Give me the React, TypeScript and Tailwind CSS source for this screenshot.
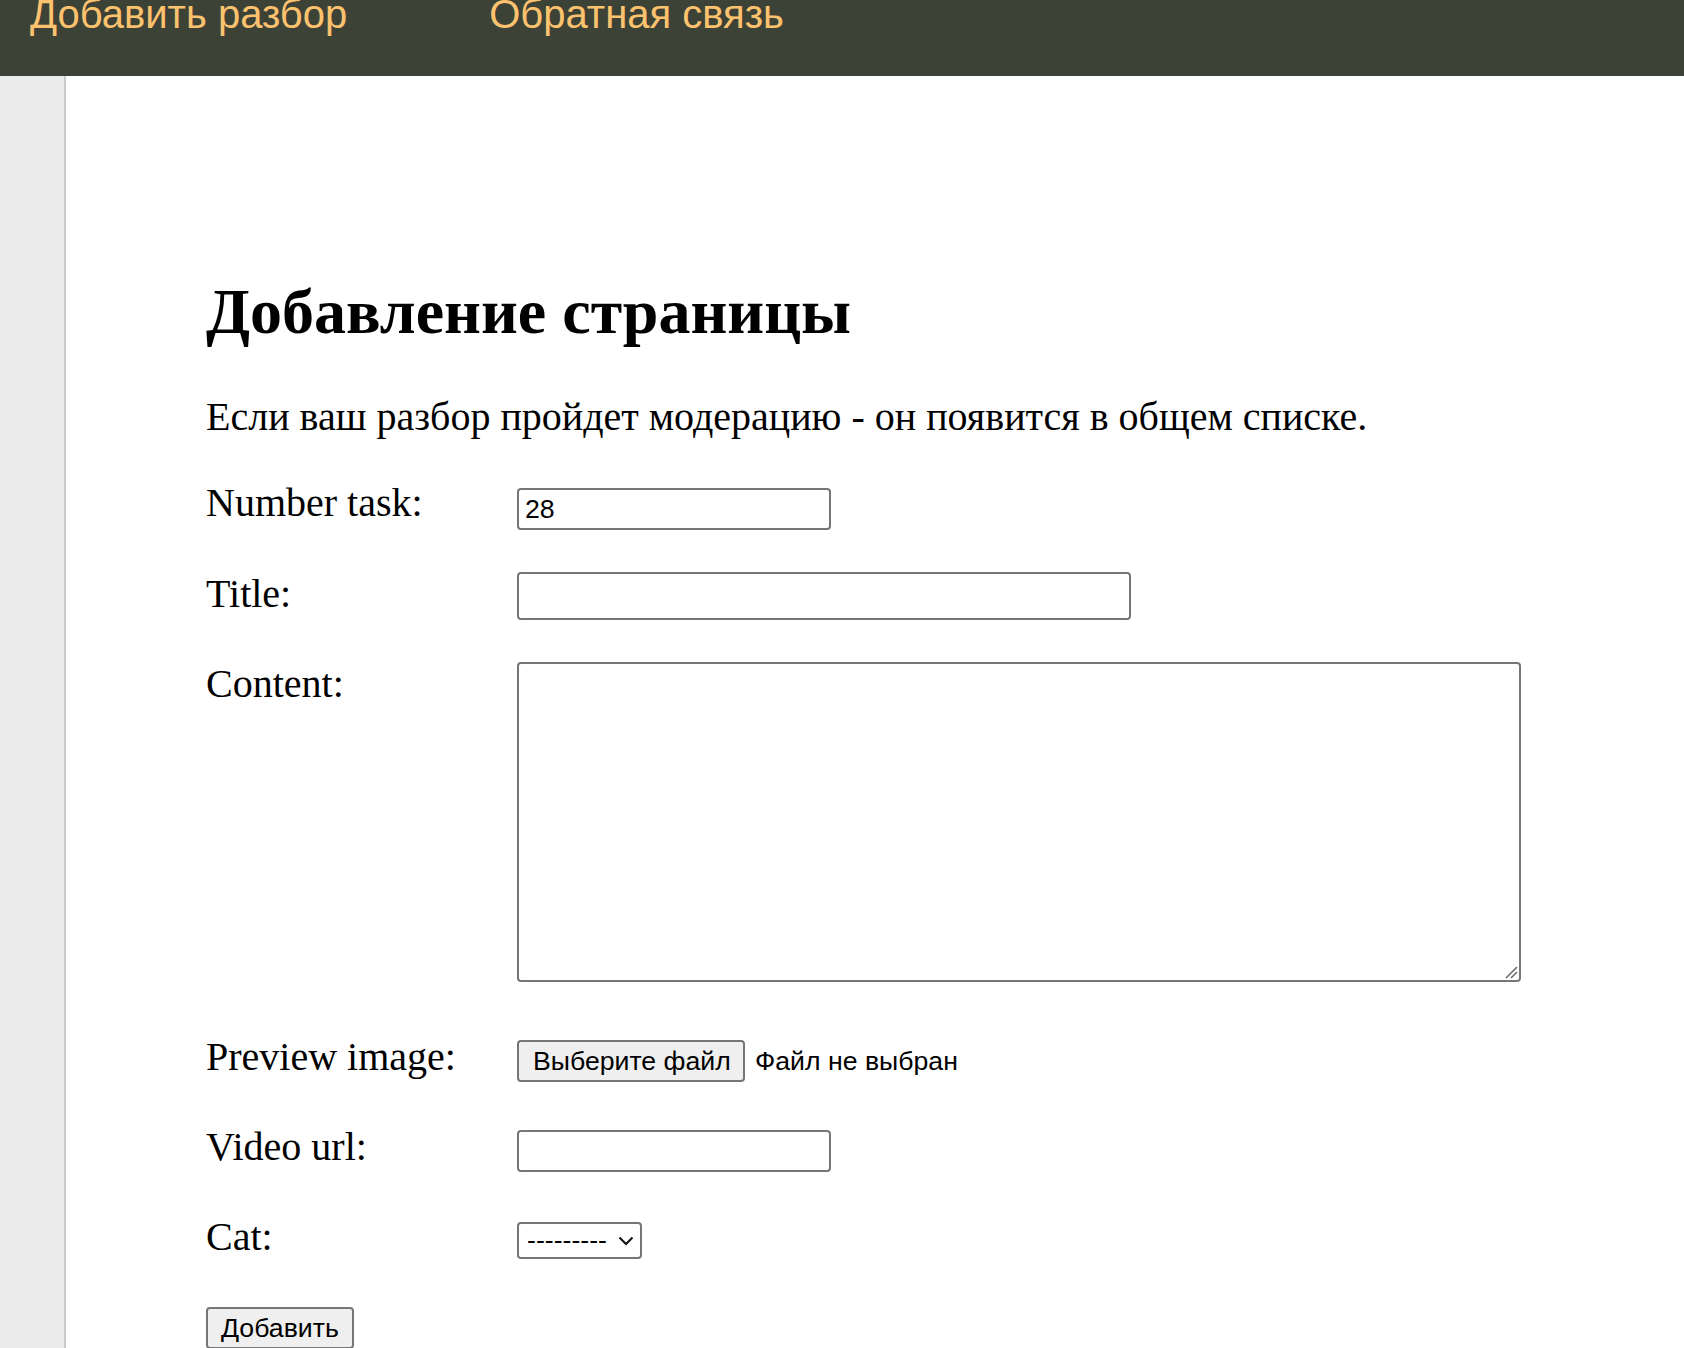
import React from 'react';

const serif = { fontFamily: '"Liberation Serif", "Times New Roman", serif' };

const navItems = ['Добавить разбор', 'Обратная связь'];

const FormRow = ({ label, className = '', children }) => (
  <div className={`flex items-start ${className}`}>
    <label className="w-[311px] shrink-0 text-[40px] leading-[46px] text-black">{label}</label>
    {children}
  </div>
);

export default function App() {
  return (
    <div className="flex h-[1348px] flex-col overflow-hidden bg-white" style={serif}>
      {/* верхнее меню (страница прокручена, верх текста обрезан) */}
      <header className="h-[76px] shrink-0 overflow-hidden bg-[#3d4237]">
        <nav className="-mt-[6px] flex gap-[142px] pl-[30px] font-['Liberation_Sans',Arial,sans-serif] text-[40px] leading-[40px] text-[#fdc26e]">
          {navItems.map((item) => (
            <a key={item} href="#" className="whitespace-nowrap">
              {item}
            </a>
          ))}
        </nav>
      </header>

      <div className="flex flex-1">
        <aside className="w-[66px] shrink-0 border-r-2 border-[#cccccc] bg-[#ececec]" />

        <main className="flex-1 pl-[140px] pt-[204px]">
          <h1 className="text-[64px] font-bold leading-[64px] text-black">Добавление страницы</h1>
          <p className="mt-[50px] text-[40px] leading-[46px] text-black">
            Если ваш разбор пройдет модерацию - он появится в общем списке.
          </p>

          <form className="font-['Liberation_Sans',Arial,sans-serif]" onSubmit={(e) => e.preventDefault()}>
            <div style={serif}>
              <FormRow label="Number task:" className="mt-[40px]">
                <input
                  type="text"
                  defaultValue="28"
                  className="mt-[8px] h-[42px] w-[314px] rounded-[4px] border-2 border-[#767676] px-[6px] font-['Liberation_Sans',Arial,sans-serif] text-[26.67px] text-black"
                />
              </FormRow>

              <FormRow label="Title:" className="mt-[41px]">
                <input
                  type="text"
                  className="mt-[1px] h-[48px] w-[614px] rounded-[4px] border-2 border-[#767676] px-[6px] font-['Liberation_Sans',Arial,sans-serif] text-[26.67px]"
                />
              </FormRow>

              <FormRow label="Content:" className="mt-[41px]">
                <div className="relative mt-[1px]">
                  <textarea className="block h-[320px] w-[1004px] resize-none rounded-[4px] border-2 border-[#767676] p-[4px] font-['Liberation_Sans',Arial,sans-serif] text-[26.67px]" />
                  {/* ручка изменения размера */}
                  <svg
                    className="pointer-events-none absolute bottom-[3px] right-[3px]"
                    width="14"
                    height="14"
                    viewBox="0 0 14 14"
                    fill="none"
                  >
                    <path d="M2 13 L13 2" stroke="#6b6b6b" strokeWidth="1.6" />
                    <path d="M7 13 L13 7" stroke="#6b6b6b" strokeWidth="1.6" />
                  </svg>
                </div>
              </FormRow>

              <FormRow label="Preview image:" className="mt-[52px]">
                <div className="mt-[6px] flex items-center whitespace-nowrap font-['Liberation_Sans',Arial,sans-serif] text-[26.67px] text-black">
                  <button
                    type="button"
                    className="h-[42px] w-[228px] whitespace-nowrap rounded-[4px] border-2 border-[#767676] bg-[#efefef] px-[14px] text-left leading-none"
                  >
                    Выберите файл
                  </button>
                  <span className="ml-[10px]">Файл не выбран</span>
                </div>
              </FormRow>

              <FormRow label="Video url:" className="mt-[42px]">
                <input
                  type="text"
                  className="mt-[6px] h-[42px] w-[314px] rounded-[4px] border-2 border-[#767676] px-[6px] font-['Liberation_Sans',Arial,sans-serif] text-[26.67px]"
                />
              </FormRow>

              <FormRow label="Cat:" className="mt-[42px]">
                <div className="relative mt-[8px]">
                  <select className="h-[37px] w-[125px] appearance-none rounded-[4px] border-2 border-[#767676] bg-white pl-[8px] font-['Liberation_Sans',Arial,sans-serif] text-[26.67px] leading-none text-black">
                    <option>---------</option>
                  </select>
                  <svg
                    className="pointer-events-none absolute left-[101px] top-[14px]"
                    width="16"
                    height="10"
                    viewBox="0 0 16 10"
                    fill="none"
                  >
                    <path d="M1.5 1.5 L8 8 L14.5 1.5" stroke="#111" strokeWidth="2" />
                  </svg>
                </div>
              </FormRow>
            </div>

            <button
              type="submit"
              className="mt-[47px] h-[42px] w-[148px] whitespace-nowrap rounded-[4px] border-2 border-[#767676] bg-[#efefef] pl-[13px] text-left text-[26.67px] leading-none text-black"
            >
              Добавить
            </button>
          </form>
        </main>
      </div>
    </div>
  );
}
